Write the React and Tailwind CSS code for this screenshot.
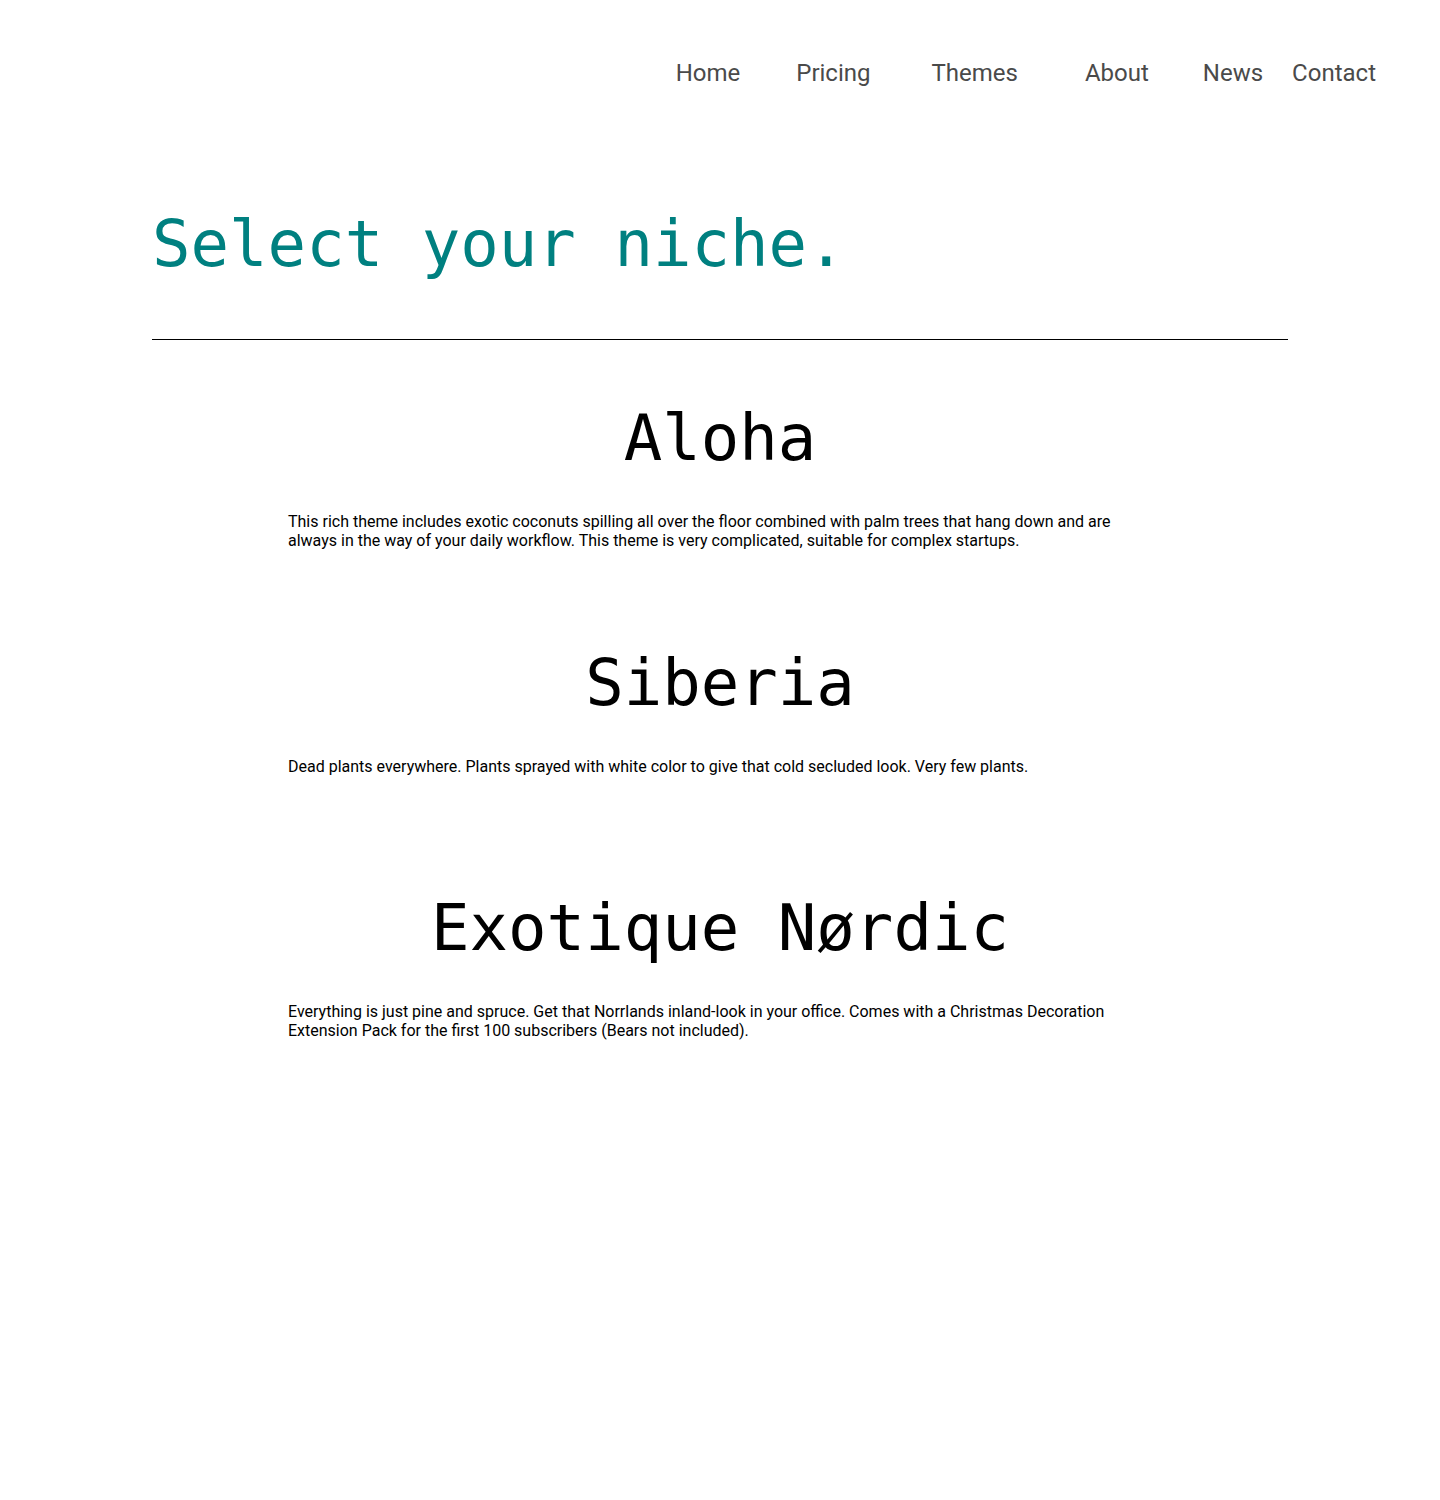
import React from "react";

const navItems = [
  { label: "Home", cls: "" },
  { label: "Pricing", cls: "ml-[56px]" },
  { label: "Themes", cls: "ml-[61px]" },
  { label: "About", cls: "ml-[67px]" },
  { label: "News", cls: "ml-[54px]" },
  { label: "Contact", cls: "ml-[29px]" },
];

const themes = [
  {
    name: "Aloha",
    text: "This rich theme includes exotic coconuts spilling all over the floor combined with palm trees that hang down and are always in the way of your daily workflow. This theme is very complicated, suitable for complex startups.",
  },
  {
    name: "Siberia",
    text: "Dead plants everywhere. Plants sprayed with white color to give that cold secluded look. Very few plants.",
  },
  {
    name: "Exotique Nørdic",
    text: "Everything is just pine and spruce. Get that Norrlands inland-look in your office. Comes with a Christmas Decoration Extension Pack for the first 100 subscribers (Bears not included).",
  },
];

const App = () => {
  return (
    <div className="w-full min-h-[1500px] bg-white font-['Roboto',sans-serif]">
      {/* top navigation */}
      <nav className="flex justify-end pt-[58px] pr-[64px]">
        {navItems.map((item) => (
          <a
            key={item.label}
            href="#"
            className={`text-2xl leading-[30px] text-[#4a4a4a] ${item.cls}`}
          >
            {item.label}
          </a>
        ))}
      </nav>

      <main className="px-[152px]">
        <h1 className="mt-[124px] text-[64px] leading-[64px] text-[#008080] font-['DejaVu_Sans_Mono',monospace]">
          Select your niche.
        </h1>
        <hr className="mt-[63px] border-0 border-t border-black" />
      </main>

      <section className="mt-[66px]">
        {themes.map((t) => (
          <div key={t.name} className="h-[245px]">
            <h2 className="text-center text-[64px] leading-[64px] text-black font-['DejaVu_Sans_Mono',monospace]">
              {t.name}
            </h2>
            <p className="mx-auto mt-[42px] w-[864px] text-base leading-[19px] text-black">
              {t.text}
            </p>
          </div>
        ))}
      </section>
    </div>
  );
};

export default App;
